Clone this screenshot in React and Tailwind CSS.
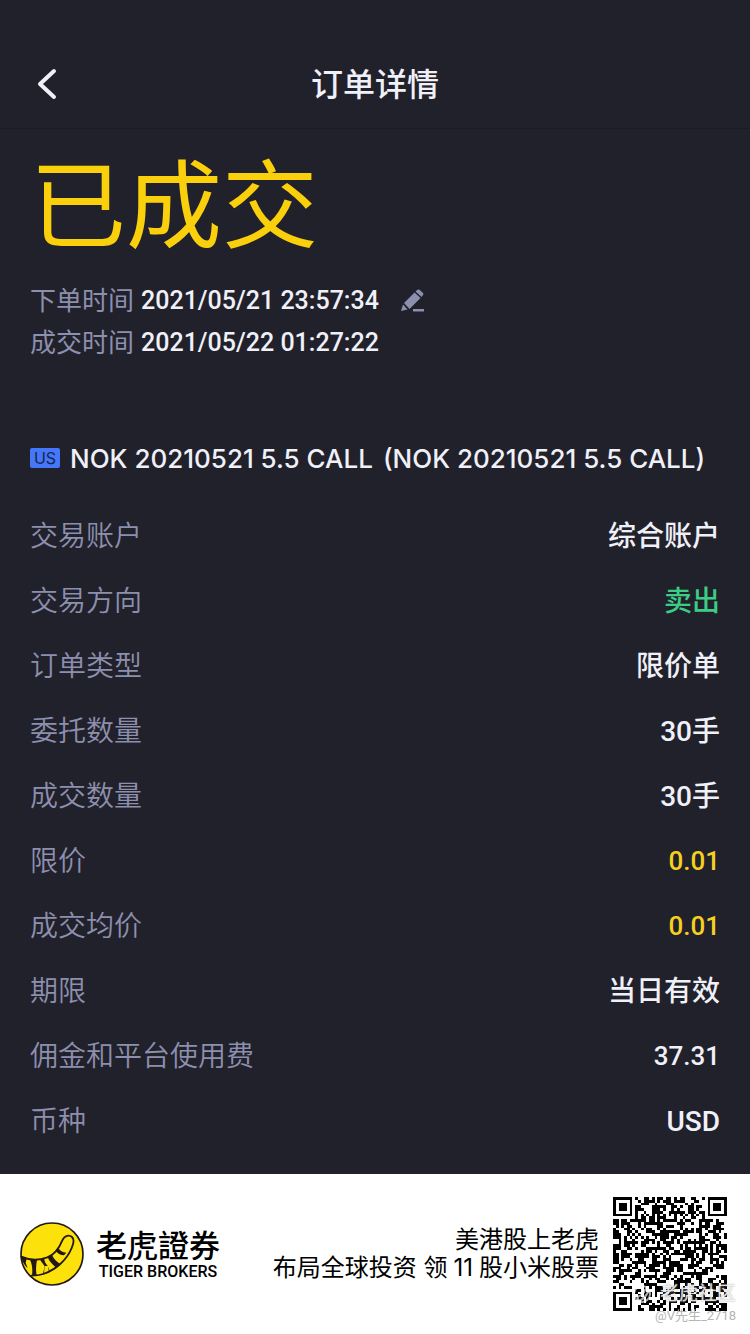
const details = [
  { label: '交易账户', value: '综合账户' },
  { label: '交易方向', value: '卖出', tone: 'text-[28px] text-[#3dcc85]' },
  { label: '订单类型', value: '限价单' },
  { label: '委托数量', value: '30手' },
  { label: '成交数量', value: '30手' },
  { label: '限价', value: '0.01', tone: 'text-[26px] text-[#f5d01e]' },
  { label: '成交均价', value: '0.01', tone: 'text-[26px] text-[#f5d01e]' },
  { label: '期限', value: '当日有效' },
  { label: '佣金和平台使用费', value: '37.31', tone: 'text-[26px]' },
  { label: '币种', value: 'USD' },
];

const QR_SIZE = 41;

// True / false inside a finder or alignment mark, null elsewhere.
function markAt(x, y) {
  const last = QR_SIZE - 7;
  const corners = [[0, 0], [last, 0], [0, last]];
  for (const [cx, cy] of corners) {
    const d = Math.max(Math.abs(x - cx - 3), Math.abs(y - cy - 3));
    if (d <= 4) return d === 3 || d <= 1;
  }
  const a = Math.max(Math.abs(x - 34), Math.abs(y - 34));
  if (a <= 2) return a !== 1;
  if (x === 6) return y % 2 === 0;
  if (y === 6) return x % 2 === 0;
  return null;
}

function qrPath() {
  let seed = 20210521;
  let d = '';
  for (let y = 0; y < QR_SIZE; y++) {
    for (let x = 0; x < QR_SIZE; x++) {
      seed = (Math.imul(seed, 1664525) + 1013904223) >>> 0;
      const mark = markAt(x, y);
      const dark = mark === null ? seed / 4294967296 < 0.54 : mark;
      if (dark) d += `M${x} ${y}h1v1h-1z`;
    }
  }
  return d;
}

const QR_PATH = qrPath();

function TigerLogo() {
  return (
    <svg viewBox="60 185 192 192" className="size-16 shrink-0" aria-hidden="true">
      <circle cx="156" cy="281" r="93" fill="#fde10a" stroke="#231815" strokeWidth="5" />
      <path
        d="M64 289C88 300 118 300 142 291C166 282 178 262 187 240C194 225 208 223 216 230C223 237 221 250 215 263C200 300 165 330 130 341C118 345 106 346 94 346"
        fill="none"
        stroke="#231815"
        strokeWidth="5.5"
        strokeLinecap="round"
      />
      <path
        d="M64 289L80 295L77 307L83 324C72 313 66 302 64 289ZM90 298L111 299C108 314 107 329 110 344L96 346C98 328 97 313 90 298ZM120 298L133 295C133 302 136 309 143 316L149 331L129 340L134 318ZM143 291L156 284C160 294 170 305 182 312L169 322C157 313 148 303 143 291ZM167 271L175 262C179 271 188 276 199 277L192 285C181 284 172 279 167 271Z"
        fill="#231815"
      />
      <path d="M132 337L134 318L144 316L146 331Z" fill="#fde10a" />
    </svg>
  );
}

function TimeRow({ label, value, children }) {
  return (
    <div className="flex h-[42px] items-center">
      <dt className="text-[26px] text-[#8d8fae]">{label}</dt>
      <dd className="ml-[7px] flex items-center text-[25px] font-medium text-[#f0f0f8]">
        {value}
        {children}
      </dd>
    </div>
  );
}

export default function App() {
  return (
    <div className="flex min-h-screen flex-col bg-[#21212b] font-[Roboto,'Noto_Sans_CJK_SC',sans-serif] text-[#f0f0f8]">
      <header className="grid h-[129px] grid-cols-[1fr_auto_1fr] items-center border-b border-[#1b1b24] px-7 pt-10">
        <button type="button" aria-label="返回" className="flex h-12 w-12 items-center pl-2">
          <svg viewBox="0 0 22 32" className="h-8 w-[22px]" fill="none" stroke="currentColor" strokeWidth="4" strokeLinecap="round" strokeLinejoin="round" aria-hidden="true">
            <path d="M18 3L4 16L18 29" />
          </svg>
        </button>
        <h1 className="pt-0.5 text-[32px] font-medium">订单详情</h1>
      </header>

      <main className="flex-1 px-[30px]">
        <p className="pt-5 text-[96px] leading-[116px] text-[#fad00c]">已成交</p>
        <dl className="mt-[15px]">
          <TimeRow label="下单时间" value="2021/05/21 23:57:34">
            <button type="button" aria-label="编辑" className="ml-[22px]">
              <svg viewBox="0 0 24 24" className="size-6" fill="#8d8fae" aria-hidden="true">
                <path d="M0 22L2 15.500L6.500 20.500ZM3 14L13.500 3.500L19.500 9L8.500 20ZM14.500 2.500L16.500 .8Q17.500 0 18.500 .8L22 4Q23 5 22 6L20.500 8Z" />
                <path d="M12 20h11v2.500h-11z" />
              </svg>
            </button>
          </TimeRow>
          <TimeRow label="成交时间" value="2021/05/22 01:27:22" />
        </dl>

        <h2 className="mt-[74px] flex h-10 items-center whitespace-nowrap font-[Inter,'Noto_Sans_CJK_SC',sans-serif] text-[26px] font-medium">
          <span className="mr-[10px] flex h-5 w-[30px] items-center justify-center rounded-xs bg-[#4478f8] text-base font-normal text-[#172450]">US</span>
          <span>NOK 20210521 5.5 CALL</span>
          <span className="ml-2.5">(NOK 20210521 5.5 CALL)</span>
        </h2>

        <dl className="mt-[26px]">
          {details.map(({ label, value, tone }) => (
            <div key={label} className="flex h-[65px] items-center justify-between">
              <dt className="text-[28px] font-[350] text-[#8d8fae]">{label}</dt>
              <dd className={`font-medium ${tone ?? 'text-[28px]'}`}>{value}</dd>
            </div>
          ))}
        </dl>
      </main>

      <footer className="relative flex h-40 items-center bg-white pl-5 pr-[23px] text-black">
        <TigerLogo />
        <div className="ml-3 flex flex-col items-center whitespace-nowrap">
          <span className="font-['Noto_Sans_CJK_TC',sans-serif] text-[31px] font-medium leading-9">老虎證券</span>
          <span className="text-base font-medium leading-5">TIGER BROKERS</span>
        </div>
        <p className="ml-auto whitespace-nowrap text-right font-[Inter,'Noto_Sans_CJK_SC',sans-serif] text-2xl leading-7">
          美港股上老虎
          <br />
          布局全球投资 领<span className="mx-1.5">11</span>股小米股票
        </p>
        <svg viewBox="0 0 41 41" className="ml-[14px] size-[114px] shrink-0" role="img" aria-label="二维码" shapeRendering="crispEdges">
          <path d={QR_PATH} fill="#000" />
        </svg>
        <div className="absolute bottom-2 right-[14px] flex flex-col items-end">
          <p className="flex items-center gap-2 text-[19px] leading-6 text-white/80 [text-shadow:0_0_2px_#999]">
            <svg viewBox="0 0 20 20" className="size-5" fill="none" stroke="#ffffffb0" strokeWidth="2" aria-hidden="true">
              <circle cx="10" cy="10" r="8" />
              <path d="M2 12Q10 14 13 6Q16 3 16 8Q13 15 6 17M6 12v5M10 11l2 4" />
            </svg>
            老虎社区
          </p>
          <p className="text-[13px] leading-5 text-[#b5b5b5]">@V先生_2718</p>
        </div>
      </footer>
    </div>
  );
}
